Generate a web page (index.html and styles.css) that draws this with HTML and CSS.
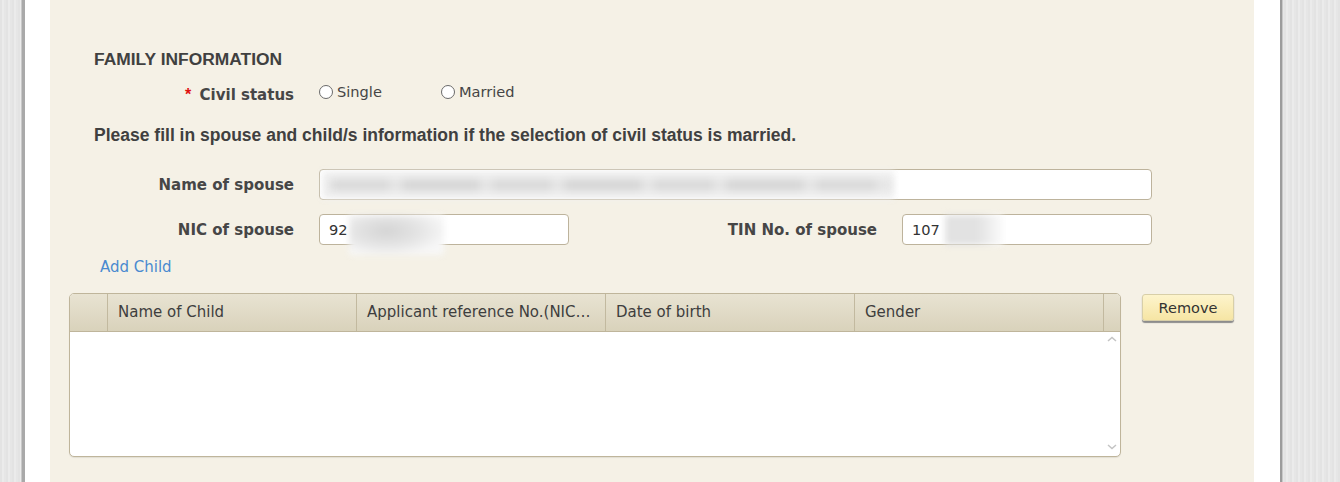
FILE: index.html
```html
<!DOCTYPE html>
<html>
<head>
<meta charset="utf-8">
<link rel="stylesheet" href="styles.css">
</head>
<body>
<div class="page">
  <div class="panel">
    <h2 class="heading">FAMILY INFORMATION</h2>
    <div class="row civil">
      <div class="label"><span class="req">*</span> Civil status</div>
      <div class="radios">
        <label class="radio r1"><span class="circle"></span>Single</label>
        <label class="radio"><span class="circle"></span>Married</label>
      </div>
    </div>
    <p class="note">Please fill in spouse and child/s information if the selection of civil status is married.</p>
    <div class="row grid">
      <div class="label">Name of spouse</div>
      <div class="input wide"><span class="blur blur-name"></span><span class="blur blur-name-text"></span></div>
    </div>
    <div class="row grid">
      <div class="label">NIC of spouse</div>
      <div class="input"><span class="val">92</span><span class="blur blur-nic"></span></div>
      <div class="label">TIN No. of spouse</div>
      <div class="input"><span class="val">107</span><span class="blur blur-tin"></span></div>
    </div>
    <a class="add-child">Add Child</a>
    <div class="table-area">
      <div class="table">
        <div class="thead">
          <div class="th first"></div>
          <div class="th">Name of Child</div>
          <div class="th">Applicant reference No.(NIC/Passport No.)</div>
          <div class="th">Date of birth</div>
          <div class="th">Gender</div>
          <div class="th last"></div>
        </div>
        <div class="tbody">
          <div class="scroll">
            <svg width="10" height="6" viewBox="0 0 10 6"><path d="M1 5 L5 1.5 L9 5" fill="none" stroke="#c4c4c4" stroke-width="1.5"/></svg>
            <svg width="10" height="6" viewBox="0 0 10 6"><path d="M1 1 L5 4.5 L9 1" fill="none" stroke="#c4c4c4" stroke-width="1.5"/></svg>
          </div>
        </div>
      </div>
      <button class="btn">Remove</button>
    </div>
  </div>
</div>
</body>
</html>
```

FILE: styles.css
```css
html, body {
  margin: 0;
  padding: 0;
  height: 100%;
}
body {
  background: repeating-linear-gradient(90deg, #e3e3e3 0px, #e3e3e3 2px, #ebebeb 2px, #ebebeb 4px, #e6e6e6 4px, #e6e6e6 6px);
  overflow: hidden;
}
.page {
  margin: 0 58px 0 22px;
  height: 482px;
  background: #fff;
  border-left: 3px solid #a9a9a9;
  border-right: 2px solid #9c9c9c;
  box-shadow: -1px 0 0 #c8c8c8, 1px 0 0 #c8c8c8;
  padding: 0 26px 0 25px;
}
.panel {
  background: #f5f1e6;
  height: 482px;
  padding: 48px 0 0 44px;
  box-sizing: border-box;
  font-family: "DejaVu Sans", Verdana, sans-serif;
  color: #444;
}
.heading {
  margin: 0;
  font-family: "Liberation Sans", Arial, sans-serif;
  font-weight: bold;
  font-size: 17.4px;
  line-height: 22px;
  color: #404040;
}
.row {
  display: grid;
  grid-template-columns: 200px 250px 283px 250px;
  column-gap: 25px;
  align-items: center;
}
.label {
  text-align: right;
  font-weight: bold;
  font-size: 15px;
  color: #464646;
}
.req {
  color: #e01010;
  font-family: "Liberation Sans", Arial, sans-serif;
  font-size: 16px;
  margin-right: 3px;
}
.civil {
  margin-top: 11px;
  height: 24px;
}
.civil .label {
  padding-top: 4px;
}
.radios {
  display: flex;
  grid-column: 2 / 5;
  padding-bottom: 3px;
}
.radio {
  display: flex;
  align-items: center;
  font-size: 14.6px;
  color: #454545;
}
.r1 {
  width: 122px;
}
.circle {
  width: 12px;
  height: 12px;
  border: 1.5px solid #6a6a6a;
  border-radius: 50%;
  background: #fff;
  margin-right: 4px;
}
.note {
  margin: 19px 0 0;
  font-family: "Liberation Sans", Arial, sans-serif;
  font-weight: bold;
  font-size: 17.5px;
  line-height: 22px;
  color: #404040;
}
.grid {
  height: 31px;
}
.note + .grid {
  margin-top: 23px;
}
.grid + .grid {
  margin-top: 14px;
}
.input {
  position: relative;
  height: 31px;
  box-sizing: border-box;
  border: 1px solid #bdb39c;
  border-radius: 4px;
  background: #fff;
  display: flex;
  align-items: center;
  padding-left: 9px;
  font-size: 14.6px;
  color: #333;
}
.wide {
  grid-column: 2 / 5;
}
.val {
  position: relative;
  z-index: 1;
}
.blur {
  position: absolute;
  filter: blur(3px);
}
.blur-name {
  left: 2px;
  width: 572px;
  top: 1px;
  height: 28px;
  background: #f1f1f1;
}
.blur-name-text {
  left: 10px;
  width: 560px;
  top: 10px;
  height: 10px;
  background: repeating-linear-gradient(90deg, #d4d4d4 0px, #d4d4d4 60px, #e4e4e4 60px, #e4e4e4 72px, #d0d0d0 72px, #d0d0d0 150px, #e4e4e4 150px, #e4e4e4 162px);
  filter: blur(5px);
}
.blur-nic {
  left: 29px;
  width: 95px;
  top: 0;
  height: 40px;
  background: radial-gradient(ellipse at 40% 40%, #d4d4d4 0%, #e4e4e4 40%, #f7f7f7 75%);
}
.blur-tin {
  left: 42px;
  width: 58px;
  top: 0;
  height: 30px;
  background: linear-gradient(90deg, #e2e2e2 0%, #e2e2e2 55%, #fbfbfb 100%);
}
.add-child {
  display: block;
  margin: 13px 0 0 6px;
  font-size: 15px;
  line-height: 18px;
  color: #4a8ad0;
}
.table-area {
  display: flex;
  align-items: flex-start;
  margin: 17px 0 0 -25px;
}
.table {
  width: 1052px;
  height: 164px;
  box-sizing: border-box;
  border: 1px solid #bfb59b;
  border-radius: 5px;
  overflow: hidden;
  background: #fff;
  box-shadow: 0 1px 1px rgba(0,0,0,0.08);
  display: flex;
  flex-direction: column;
}
.thead {
  display: flex;
  height: 37px;
  background: linear-gradient(#e8e3d2, #d9d2bb);
  border-bottom: 1px solid #bfb59b;
  flex: none;
}
.th {
  width: 249px;
  box-sizing: border-box;
  border-left: 1px solid #c2b99f;
  padding: 0 10px;
  font-size: 15px;
  color: #3e3e3e;
  white-space: nowrap;
  overflow: hidden;
  text-overflow: ellipsis;
  line-height: 37px;
}
.th.first {
  width: 37px;
  border-left: none;
}
.th.last {
  width: 17px;
  padding: 0;
}
.tbody {
  flex: 1;
  display: flex;
  justify-content: flex-end;
}
.scroll {
  width: 17px;
  display: flex;
  flex-direction: column;
  justify-content: space-between;
  align-items: center;
  padding: 4px 0 6px;
}
.btn {
  margin: 1px 0 0 21px;
  width: 92px;
  height: 27px;
  border: 1px solid #d8cfa8;
  border-radius: 3px;
  background: linear-gradient(#fdf4cc, #f6e5a4);
  box-shadow: 0 2px 1px #8c8c8c;
  font-family: "DejaVu Sans", Verdana, sans-serif;
  font-size: 14.5px;
  color: #333;
  padding: 0;
}
```
